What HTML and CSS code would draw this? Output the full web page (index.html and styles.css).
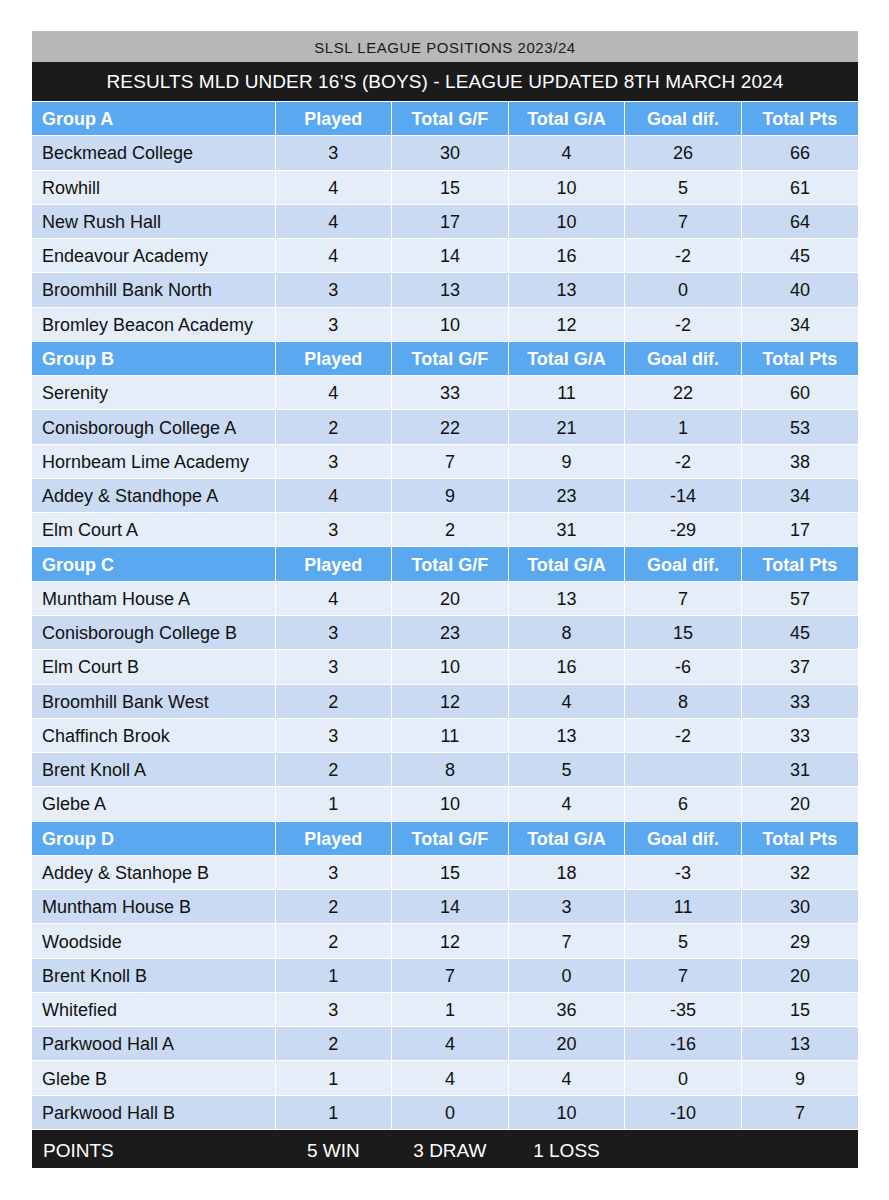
FILE: index.html
```html
<!DOCTYPE html>
<html>
<head>
<meta charset="utf-8">
<link rel="stylesheet" href="styles.css">
</head>
<body>
<div class="sheet">
  <div class="topbar">SLSL LEAGUE POSITIONS 2023/24</div>
  <div class="titlebar">RESULTS MLD UNDER 16’S (BOYS) - LEAGUE UPDATED 8TH MARCH 2024</div>
  <table class="league">
    <colgroup>
      <col class="c-team"><col class="c-num"><col class="c-num"><col class="c-num"><col class="c-num"><col class="c-num">
    </colgroup>
    <tbody>
      <tr class="head"><td>Group A</td><td>Played</td><td>Total G/F</td><td>Total G/A</td><td>Goal dif.</td><td>Total Pts</td></tr>
      <tr class="dark"><td>Beckmead College</td><td>3</td><td>30</td><td>4</td><td>26</td><td>66</td></tr>
      <tr class="light"><td>Rowhill</td><td>4</td><td>15</td><td>10</td><td>5</td><td>61</td></tr>
      <tr class="dark"><td>New Rush Hall</td><td>4</td><td>17</td><td>10</td><td>7</td><td>64</td></tr>
      <tr class="light"><td>Endeavour Academy</td><td>4</td><td>14</td><td>16</td><td>-2</td><td>45</td></tr>
      <tr class="dark"><td>Broomhill Bank North</td><td>3</td><td>13</td><td>13</td><td>0</td><td>40</td></tr>
      <tr class="light"><td>Bromley Beacon Academy</td><td>3</td><td>10</td><td>12</td><td>-2</td><td>34</td></tr>

      <tr class="head"><td>Group B</td><td>Played</td><td>Total G/F</td><td>Total G/A</td><td>Goal dif.</td><td>Total Pts</td></tr>
      <tr class="light"><td>Serenity</td><td>4</td><td>33</td><td>11</td><td>22</td><td>60</td></tr>
      <tr class="dark"><td>Conisborough College A</td><td>2</td><td>22</td><td>21</td><td>1</td><td>53</td></tr>
      <tr class="light"><td>Hornbeam Lime Academy</td><td>3</td><td>7</td><td>9</td><td>-2</td><td>38</td></tr>
      <tr class="dark"><td>Addey &amp; Standhope A</td><td>4</td><td>9</td><td>23</td><td>-14</td><td>34</td></tr>
      <tr class="light"><td>Elm Court A</td><td>3</td><td>2</td><td>31</td><td>-29</td><td>17</td></tr>

      <tr class="head"><td>Group C</td><td>Played</td><td>Total G/F</td><td>Total G/A</td><td>Goal dif.</td><td>Total Pts</td></tr>
      <tr class="light"><td>Muntham House A</td><td>4</td><td>20</td><td>13</td><td>7</td><td>57</td></tr>
      <tr class="dark"><td>Conisborough College B</td><td>3</td><td>23</td><td>8</td><td>15</td><td>45</td></tr>
      <tr class="light"><td>Elm Court B</td><td>3</td><td>10</td><td>16</td><td>-6</td><td>37</td></tr>
      <tr class="dark"><td>Broomhill Bank West</td><td>2</td><td>12</td><td>4</td><td>8</td><td>33</td></tr>
      <tr class="light"><td>Chaffinch Brook</td><td>3</td><td>11</td><td>13</td><td>-2</td><td>33</td></tr>
      <tr class="dark"><td>Brent Knoll A</td><td>2</td><td>8</td><td>5</td><td></td><td>31</td></tr>
      <tr class="light"><td>Glebe A</td><td>1</td><td>10</td><td>4</td><td>6</td><td>20</td></tr>

      <tr class="head"><td>Group D</td><td>Played</td><td>Total G/F</td><td>Total G/A</td><td>Goal dif.</td><td>Total Pts</td></tr>
      <tr class="light"><td>Addey &amp; Stanhope B</td><td>3</td><td>15</td><td>18</td><td>-3</td><td>32</td></tr>
      <tr class="dark"><td>Muntham House B</td><td>2</td><td>14</td><td>3</td><td>11</td><td>30</td></tr>
      <tr class="light"><td>Woodside</td><td>2</td><td>12</td><td>7</td><td>5</td><td>29</td></tr>
      <tr class="dark"><td>Brent Knoll B</td><td>1</td><td>7</td><td>0</td><td>7</td><td>20</td></tr>
      <tr class="light"><td>Whitefied</td><td>3</td><td>1</td><td>36</td><td>-35</td><td>15</td></tr>
      <tr class="dark"><td>Parkwood Hall A</td><td>2</td><td>4</td><td>20</td><td>-16</td><td>13</td></tr>
      <tr class="light"><td>Glebe B</td><td>1</td><td>4</td><td>4</td><td>0</td><td>9</td></tr>
      <tr class="dark"><td>Parkwood Hall B</td><td>1</td><td>0</td><td>10</td><td>-10</td><td>7</td></tr>

      <tr class="foot"><td>POINTS</td><td>5 WIN</td><td>3 DRAW</td><td>1 LOSS</td><td></td><td></td></tr>
    </tbody>
  </table>
</div>
</body>
</html>
```

FILE: styles.css
```css
html, body {
  margin: 0;
  padding: 0;
  background: #ffffff;
}

body {
  font-family: "Liberation Sans", Arial, sans-serif;
  color: #111111;
}

.sheet {
  width: 826px;
  margin: 31px 0 0 32px;
  display: flex;
  flex-direction: column;
}

.topbar {
  height: 31px;
  box-sizing: border-box;
  padding-top: 2px;
  background: #b7b7b7;
  color: #1a1a1a;
  font-size: 15px;
  letter-spacing: 0.55px;
  display: flex;
  align-items: center;
  justify-content: center;
}

.titlebar {
  height: 39px;
  box-sizing: border-box;
  padding-top: 1px;
  background: #1b1b1b;
  color: #ffffff;
  font-size: 19px;
  letter-spacing: 0.1px;
  display: flex;
  align-items: center;
  justify-content: center;
}

.league {
  width: 826px;
  border-collapse: collapse;
  table-layout: fixed;
}

.c-team { width: 243px; }
.c-num { width: 116.6px; }

.league td {
  height: 34.27px;
  padding: 2px 0 0 0;
  box-sizing: border-box;
  text-align: center;
  vertical-align: middle;
  font-size: 18px;
  border: 1px solid #ffffff;
  white-space: nowrap;
}

.league td:first-child {
  text-align: left;
  padding-left: 10px;
  border-left: none;
}

.league td:last-child {
  border-right: none;
}

.head td {
  background: #5aa8f0;
  color: #ffffff;
  font-weight: bold;
}

.dark td {
  background: #c9daf2;
}

.light td {
  background: #e5edf8;
}

.foot td {
  height: 39px;
  padding-top: 4px;
  background: #1b1b1b;
  color: #ffffff;
  font-size: 19px;
  border: none;
}

.foot td:first-child {
  padding-left: 11px;
}
```
